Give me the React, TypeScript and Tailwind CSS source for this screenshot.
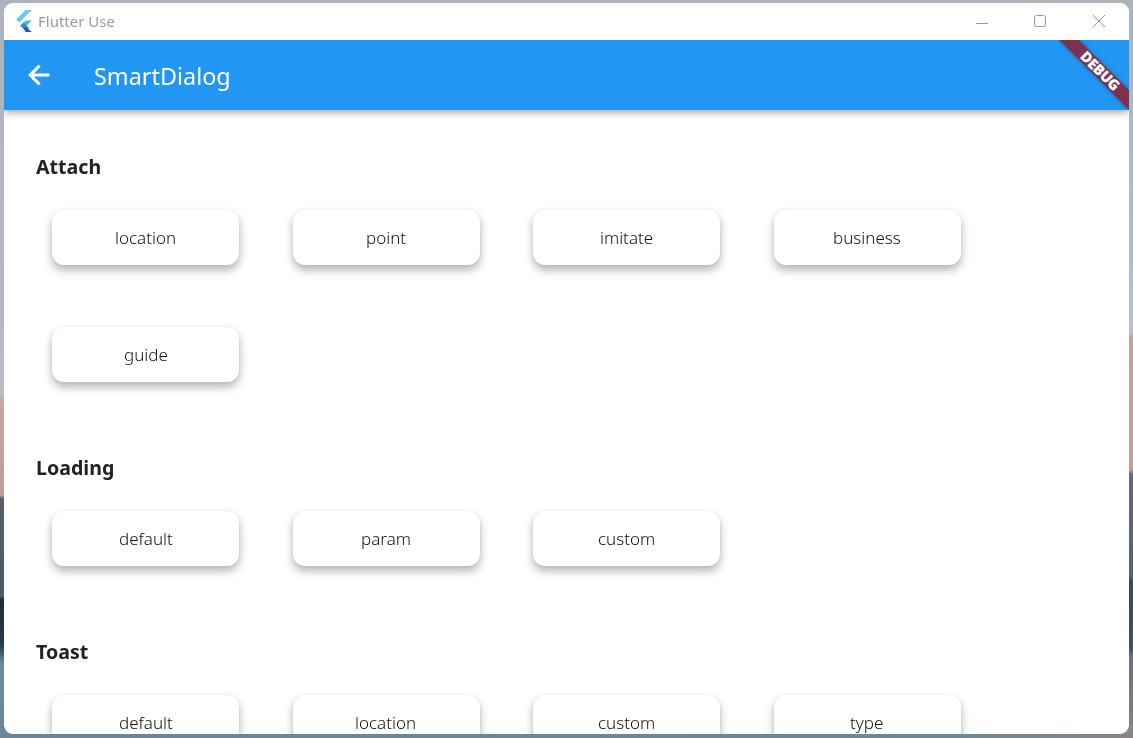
const SECCIONES = [
  { titulo: "Attach", items: ["location", "point", "imitate", "business", "guide"] },
  { titulo: "Loading", items: ["default", "param", "custom"] },
  { titulo: "Toast", items: ["default", "location", "custom", "type"] },
];

function FlutterLogo() {
  return (
    <svg width="19" height="23" viewBox="0 0 18 22" className="shrink-0">
      <polygon points="11,0 17,0 5,12 2,9" fill="#6cc5f3" />
      <polygon points="17,10 11,10 6,15 9,18" fill="#54b4ea" />
      <polygon points="6,15 9,12 15,18 9,18" fill="#2f8fd6" />
      <polygon points="9,18 11,16 17,21 11,21" fill="#1c5fa8" />
    </svg>
  );
}

function Boton({ texto }: { texto: string }) {
  return (
    <button
      type="button"
      className="h-[55px] w-[187px] rounded-[12px] bg-white shadow-[0_5px_10px_rgba(0,0,0,0.3),0_0_3px_rgba(0,0,0,0.05)]"
    >
      <span className="inline-block text-[17px] font-light text-[#111] will-change-transform">{texto}</span>
    </button>
  );
}

export default function App() {
  return (
    <div className="h-[738px] w-[1133px] overflow-hidden [background:linear-gradient(#adb3bd,#adb3bd)_top/100%_8px_no-repeat,linear-gradient(90deg,#6c8695_0,#6f8794_85%,#8a8486_100%)_bottom/100%_14px_no-repeat,linear-gradient(180deg,#adb3bd_0,#b5bcc6_395px,#c4aaa3_398px,#bb9f98_495px,#555f69_499px,#4c5b69_596px,#1f2c3a_600px,#2a3948_645px,#6f8c9e_664px,#6c8695_738px)_left/50%_100%_no-repeat,linear-gradient(180deg,#adb3bd_0,#b9bfcb_333px,#bfa39d_337px,#bda19b_470px,#666a72_474px,#5c626b_576px,#3a4c5e_580px,#3f4f60_648px,#6b7078_656px,#8a8486_738px)_right/50%_100%_no-repeat] pt-[3px] pr-[4px] pb-[4px] pl-[4px] font-['Noto_Sans',sans-serif]">
      <div className="flex h-full flex-col overflow-hidden rounded-[9px] bg-white">
        <div className="relative z-20 flex h-[37px] shrink-0 items-center bg-white pl-[10px]">
          <FlutterLogo />
          <span className="ml-[5px] text-[15px] text-[#9a9a9a] will-change-transform">Flutter Use</span>
          <div className="ml-auto flex items-center">
            <svg width="46" height="37" viewBox="0 0 46 37" className="mr-[12px]">
              <path d="M17 20.5h12" stroke="#9a9a9a" strokeWidth="1" fill="none" />
            </svg>
            <svg width="46" height="37" viewBox="0 0 46 37" className="mr-[13px]">
              <rect x="17.5" y="12.5" width="11" height="11" rx="2" stroke="#9a9a9a" strokeWidth="1" fill="none" />
            </svg>
            <svg width="46" height="37" viewBox="0 0 46 37" className="mr-[7px]">
              <path d="M17 12l12 12M29 12l-12 12" stroke="#9a9a9a" strokeWidth="1" fill="none" />
            </svg>
          </div>
        </div>

        <div className="relative z-10 flex h-[70px] shrink-0 items-center bg-[#2196f3] shadow-[0_2px_8px_rgba(0,0,0,0.4)]">
          <svg width="28" height="28" viewBox="0 0 24 24" className="ml-[21px] mt-[-1px]">
            <path d="M21 12H4.5M12.5 4L4.5 12l8 8" stroke="#fff" strokeWidth="2.7" fill="none" />
          </svg>
          <span className="ml-[41px] translate-y-[2px] text-[23.4px] text-white will-change-transform">SmartDialog</span>
          <div className="absolute top-0 right-0 h-[70px] w-[70px] overflow-hidden">
            <div className="absolute top-[24px] -left-[19px] flex h-[14px] w-[120px] rotate-45 items-center justify-center bg-[#7c3350] text-[14.5px] font-black tracking-[-0.3px] text-white shadow-[0_0_5px_rgba(0,0,0,0.25)]">
              DEBUG
            </div>
          </div>
        </div>

        <div className="min-h-0 flex-1 overflow-hidden pl-[32px] pt-[42px]">
          {SECCIONES.map((s) => (
            <section key={s.titulo} className="mb-[71px]">
              <h2 className="text-[19.6px] leading-[30px] font-bold text-[#222] will-change-transform">{s.titulo}</h2>
              <div className="mt-[28px] flex flex-wrap gap-x-[53.5px] gap-y-[62px] pl-[16px]">
                {s.items.map((t) => (
                  <Boton key={t} texto={t} />
                ))}
              </div>
            </section>
          ))}
        </div>
      </div>
    </div>
  );
}
